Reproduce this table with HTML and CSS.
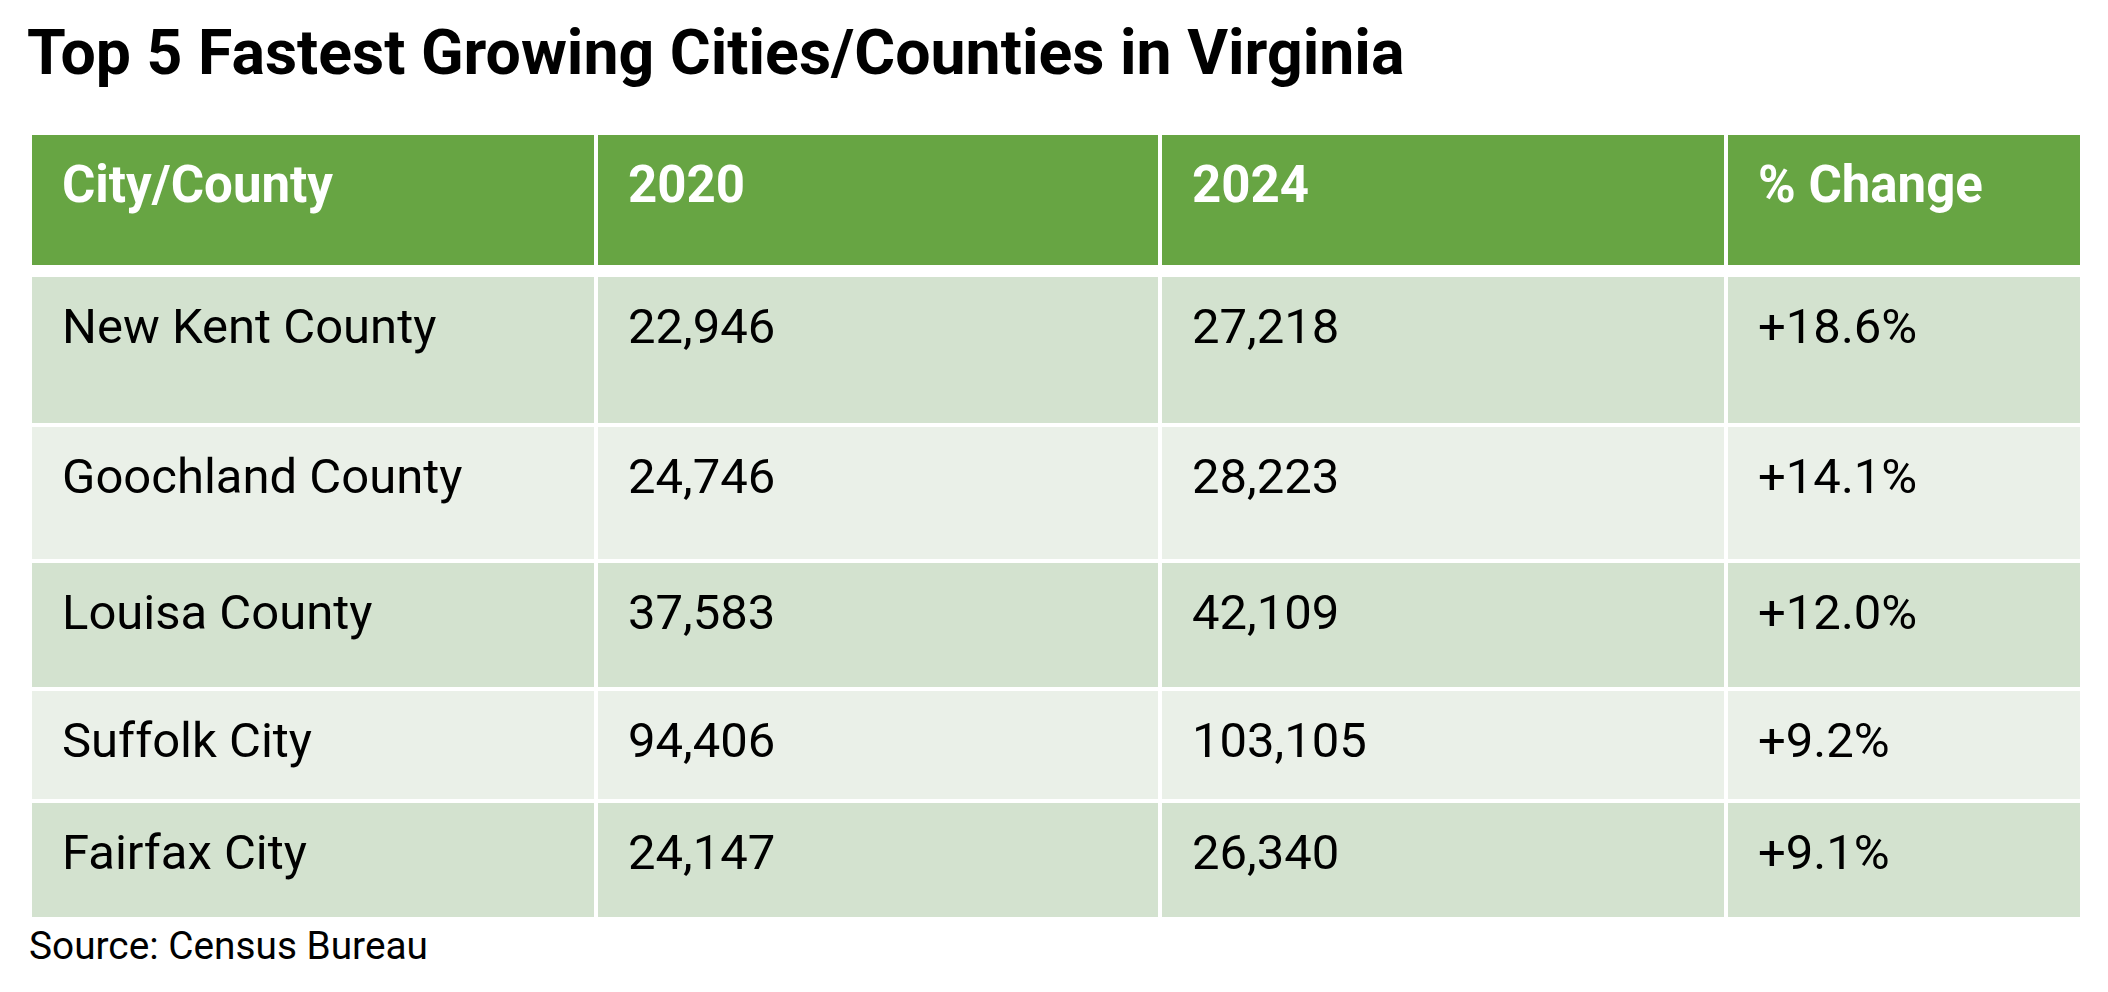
FILE: index.html
```html
<!DOCTYPE html>
<html lang="en">
<head>
<meta charset="utf-8">
<title>Top 5 Fastest Growing Cities/Counties in Virginia</title>
<link rel="stylesheet" href="styles.css">
</head>
<body>
<main class="page">
  <h1 class="title">Top 5 Fastest Growing Cities/Counties in Virginia</h1>
  <div class="table">
    <div class="row head">
      <div class="cell">City/County</div>
      <div class="cell">2020</div>
      <div class="cell">2024</div>
      <div class="cell">% Change</div>
    </div>
    <div class="row dark r1">
      <div class="cell">New Kent County</div>
      <div class="cell">22,946</div>
      <div class="cell">27,218</div>
      <div class="cell">+18.6%</div>
    </div>
    <div class="row light r2">
      <div class="cell">Goochland County</div>
      <div class="cell">24,746</div>
      <div class="cell">28,223</div>
      <div class="cell">+14.1%</div>
    </div>
    <div class="row dark r3">
      <div class="cell">Louisa County</div>
      <div class="cell">37,583</div>
      <div class="cell">42,109</div>
      <div class="cell">+12.0%</div>
    </div>
    <div class="row light r4">
      <div class="cell">Suffolk City</div>
      <div class="cell">94,406</div>
      <div class="cell">103,105</div>
      <div class="cell">+9.2%</div>
    </div>
    <div class="row dark r5">
      <div class="cell">Fairfax City</div>
      <div class="cell">24,147</div>
      <div class="cell">26,340</div>
      <div class="cell">+9.1%</div>
    </div>
  </div>
  <p class="source">Source: Census Bureau</p>
</main>
</body>
</html>
```

FILE: styles.css
```css
html, body {
  margin: 0;
  padding: 0;
  background: #ffffff;
}

body {
  font-family: Roboto, "Liberation Sans", sans-serif;
  color: #000000;
}

.page {
  padding: 0 0 0 32px;
}

.title {
  margin: 22px 0 0 -5px;
  font-size: 62.6px;
  line-height: 1;
  font-weight: 700;
  height: 62px;
}

.table {
  margin-top: 51px;
  display: flex;
  flex-direction: column;
  gap: 4px;
  width: 2048px;
}

.row {
  display: grid;
  grid-template-columns: 562px 560px 562px 352px;
  column-gap: 4px;
}

.cell {
  padding: 25px 0 0 30px;
  font-size: 49px;
  line-height: 1;
}

.head {
  height: 130px;
  margin-bottom: 8px;
}

.head .cell {
  background: #67a543;
  color: #ffffff;
  font-weight: 700;
  font-size: 51px;
  padding-top: 24px;
}

.dark .cell {
  background: #d3e2cf;
}

.light .cell {
  background: #eaf0e8;
}

.r1 { height: 146px; }
.r2 { height: 132px; }
.r3 { height: 124px; }
.r4 { height: 108px; }
.r5 { height: 114px; }

.source {
  margin: 10px 0 0 -3px;
  font-size: 38.8px;
  line-height: 1;
}
```
